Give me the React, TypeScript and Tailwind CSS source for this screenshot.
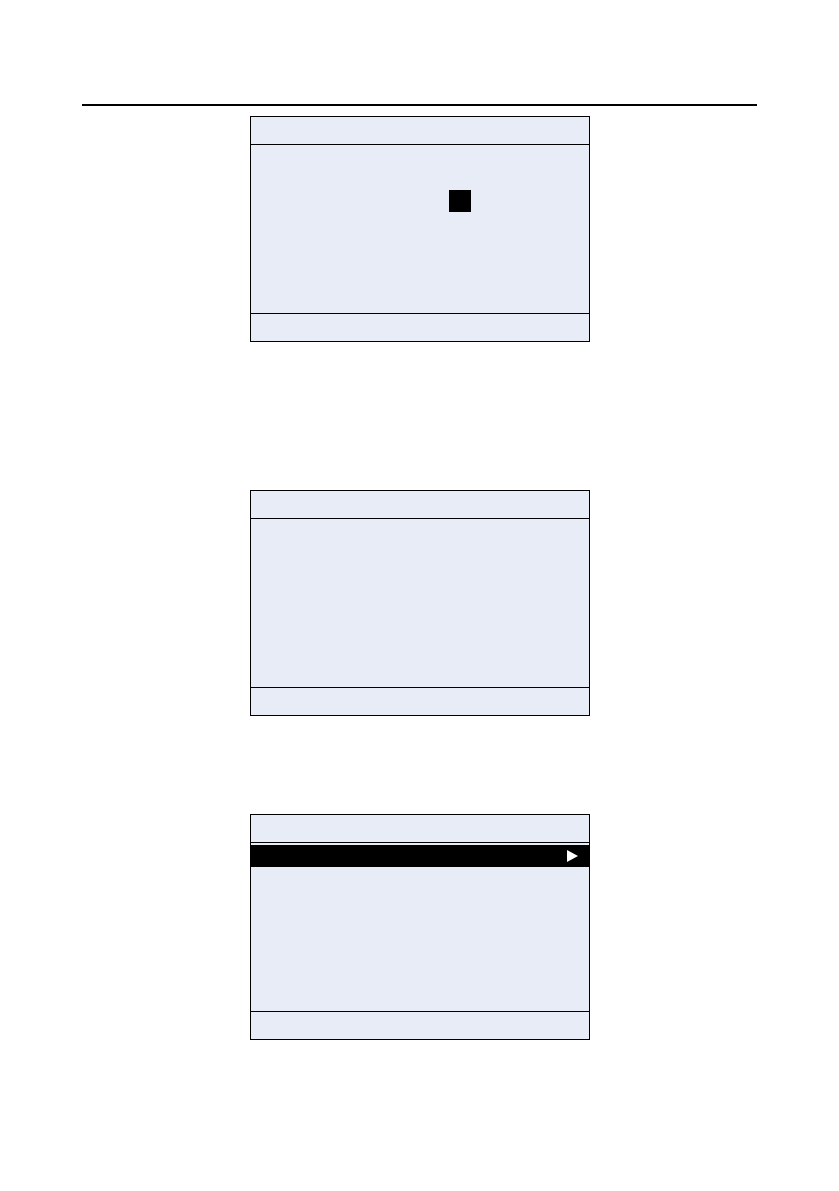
import React from 'react';

const Screen: React.FC<{ children?: React.ReactNode; className?: string }> = ({ children, className = '' }) => (
  <div className={`mx-auto flex h-[226px] w-[340px] flex-col border border-black bg-[#e8ecf6] ${className}`}>
    <div className="h-[28px] shrink-0 border-b border-black" />
    <div className="flex-1">{children}</div>
    <div className="h-[28px] shrink-0 border-t border-black" />
  </div>
);

const App: React.FC = () => {
  return (
    <div className="min-h-[1191px] w-full bg-white pt-[104px]" style={{ fontFamily: '"Liberation Sans", Arial, sans-serif' }}>
      <div className="mx-[82px] h-[2px] bg-black" />

      <div className="mt-[10px]">
        <Screen>
          {/* cursor */}
          <div className="pl-[198px] pt-[45px]">
            <div className="h-[22px] w-[22px] bg-black" />
          </div>
        </Screen>
      </div>

      <div className="mt-[148px]">
        <Screen />
      </div>

      <div className="mt-[98px]">
        <Screen>
          <div className="mt-[2px] flex h-[22px] items-center justify-end bg-black pr-[11px]">
            <svg width="11" height="12" viewBox="0 0 11 12">
              <polygon points="0,0 11,6 0,12" fill="#ffffff" />
            </svg>
          </div>
        </Screen>
      </div>
    </div>
  );
};

export default App;
